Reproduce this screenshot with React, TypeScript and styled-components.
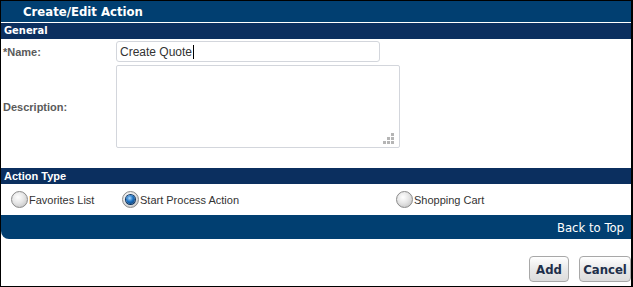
import React from "react";
import styled, { createGlobalStyle } from "styled-components";

const Global = createGlobalStyle`
  html, body { margin: 0; padding: 0; background: #fff; }
  body { font-family: "Liberation Sans", Arial, sans-serif; }
`;

const Frame = styled.div`
  box-sizing: border-box;
  width: 633px;
  height: 287px;
  border-style: solid;
  border-color: #000;
  border-width: 1px 2px 1px 1px;
  background: #fff;
  display: flex;
  flex-direction: column;
`;

const TitleBar = styled.div`
  height: 21px;
  line-height: 21px;
  background: #013f71;
  color: #fff;
  font-family: "DejaVu Sans Condensed", "DejaVu Sans", sans-serif;
  font-weight: bold;
  font-size: 13px;
  padding-left: 22px;
  border-bottom: 1px solid #fff;
`;

const SectionBar = styled.div<{ $top?: number }>`
  height: 16px;
  line-height: 16px;
  background: #0b2f5f;
  color: #fff;
  font-weight: bold;
  font-size: 11px;
  padding-left: 3px;
  margin-top: ${(p) => p.$top ?? 0}px;
  font-family: ${(p) => (p.$top ? `"Liberation Sans", Arial, sans-serif` : `"DejaVu Sans Condensed", sans-serif`)};
`;

const FormGrid = styled.div`
  display: grid;
  grid-template-columns: 115px auto;
  row-gap: 3px;
  margin-top: 2px;
  justify-content: start;
`;

const Label = styled.div`
  display: flex;
  align-items: center;
  padding-left: 2px;
  font-size: 11px;
  font-weight: bold;
  color: #5a5a5a;
`;

const TextField = styled.div`
  box-sizing: border-box;
  width: 264px;
  height: 21px;
  border: 1px solid #d3d6dc;
  border-radius: 3px;
  padding-left: 3px;
  display: flex;
  align-items: center;
  font-size: 12px;
  color: #333;
`;

const Caret = styled.span`
  display: inline-block;
  width: 1px;
  height: 14px;
  background: #000;
  margin-left: 1px;
`;

const TextArea = styled.div`
  box-sizing: border-box;
  position: relative;
  width: 284px;
  height: 83px;
  border: 1px solid #d3d6dc;
  border-radius: 2px;
`;

const Grip = styled.svg`
  position: absolute;
  right: 5px;
  bottom: 3px;
`;

const RadioRow = styled.div`
  display: grid;
  grid-template-columns: 111px 274px auto;
  align-items: center;
  height: 31px;
  padding-left: 10px;
`;

const RadioItem = styled.label`
  display: flex;
  align-items: center;
  gap: 1px;
  font-size: 11px;
  color: #333;
`;

const RadioDot = styled.span<{ $checked?: boolean }>`
  box-sizing: border-box;
  width: 17px;
  height: 17px;
  border-radius: 50%;
  border: 1px solid #8a8a8a;
  background: radial-gradient(circle at 40% 35%, #ffffff 0%, #e6e6e6 45%, #b9b9b9 100%);
  display: flex;
  align-items: center;
  justify-content: center;
  &::after {
    content: "";
    display: ${(p) => (p.$checked ? "block" : "none")};
    width: 9px;
    height: 9px;
    border-radius: 50%;
    background: radial-gradient(circle at 40% 35%, #a9d8ff 0%, #1a6fc0 45%, #0a2b55 100%);
    box-shadow: 0 0 0 1px #0f3560;
  }
`;

const Footer = styled.div`
  height: 24px;
  background: #013f71;
  border-bottom-left-radius: 8px;
  display: flex;
  align-items: center;
  justify-content: flex-end;
  padding-right: 7px;
  color: #fff;
  font-family: "DejaVu Sans Condensed", "DejaVu Sans", sans-serif;
  font-size: 13px;
`;

const ButtonBar = styled.div`
  display: flex;
  justify-content: flex-end;
  gap: 10px;
  margin-top: 17px;
`;

const Button = styled.button<{ $w: number }>`
  box-sizing: border-box;
  width: ${(p) => p.$w}px;
  height: 26px;
  border: 1px solid #a8a8a8;
  border-radius: 4px;
  background: linear-gradient(#ffffff, #e9e9e9 50%, #dcdcdc);
  font-family: "DejaVu Sans Condensed", "DejaVu Sans", sans-serif;
  font-weight: bold;
  font-size: 13px;
  color: #1e2f4a;
  padding: 0;
`;

export default function App() {
  const dots: [number, number][] = [
    [8, 0],
    [4, 4], [8, 4],
    [0, 8], [4, 8], [8, 8],
  ];
  return (
    <>
      <Global />
      <Frame>
        <TitleBar>Create/Edit Action</TitleBar>
        <SectionBar>General</SectionBar>
        <FormGrid>
          <Label>*Name:</Label>
          <TextField>
            Create Quote
            <Caret />
          </TextField>
          <Label>Description:</Label>
          <TextArea>
            <Grip width="11" height="11" viewBox="0 0 11 11">
              {dots.map(([x, y], i) => (
                <rect key={i} x={x} y={y} width="3" height="3" fill="#b5b5b5" />
              ))}
            </Grip>
          </TextArea>
        </FormGrid>
        <SectionBar $top={20}>Action Type</SectionBar>
        <RadioRow>
          <RadioItem>
            <RadioDot />
            Favorites List
          </RadioItem>
          <RadioItem>
            <RadioDot $checked />
            Start Process Action
          </RadioItem>
          <RadioItem>
            <RadioDot />
            Shopping Cart
          </RadioItem>
        </RadioRow>
        <Footer>Back to Top</Footer>
        <ButtonBar>
          <Button $w={40}>Add</Button>
          <Button $w={52}>Cancel</Button>
        </ButtonBar>
      </Frame>
    </>
  );
}
